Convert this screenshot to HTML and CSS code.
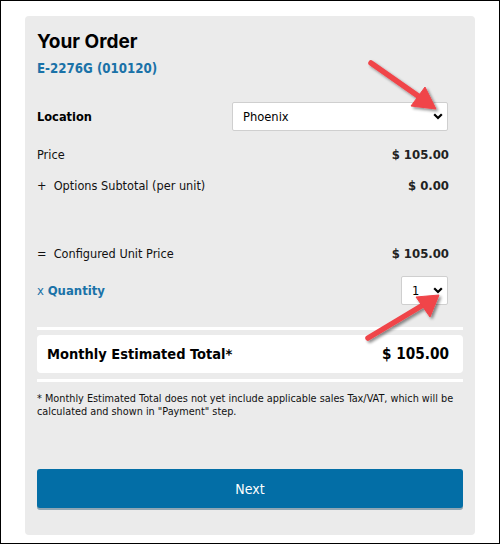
FILE: index.html
```html
<!DOCTYPE html>
<html lang="en">
<head>
<meta charset="utf-8">
<title>Your Order</title>
<link rel="stylesheet" href="styles.css">
</head>
<body>
<div class="frame">
  <div class="panel">
    <h1 class="title">Your Order</h1>
    <div class="sku">E-2276G (010120)</div>

    <div class="row row-location">
      <span class="label-strong">Location</span>
      <div class="select select-location">
        <span>Phoenix</span>
        <svg class="chev" width="10" height="7" viewBox="0 0 10 7"><path d="M1.2 1.2 L5 5 L8.8 1.2" fill="none" stroke="#000" stroke-width="2.2"/></svg>
      </div>
    </div>

    <div class="row row-price">
      <span>Price</span>
      <span class="value">$ 105.00</span>
    </div>

    <div class="row row-options">
      <span>+&nbsp; Options Subtotal (per unit)</span>
      <span class="value">$ 0.00</span>
    </div>

    <div class="row row-config">
      <span>=&nbsp; Configured Unit Price</span>
      <span class="value">$ 105.00</span>
    </div>

    <div class="row row-qty">
      <span class="qty-label">x <b>Quantity</b></span>
      <div class="select select-qty">
        <span>1</span>
        <svg class="chev" width="10" height="7" viewBox="0 0 10 7"><path d="M1.2 1.2 L5 5 L8.8 1.2" fill="none" stroke="#000" stroke-width="2.2"/></svg>
      </div>
    </div>

    <div class="rule rule-top"></div>
    <div class="total">
      <span>Monthly Estimated Total*</span>
      <span>$ 105.00</span>
    </div>
    <div class="rule rule-bottom"></div>

    <p class="note">* Monthly Estimated Total does not yet include applicable sales Tax/VAT, which will be calculated and shown in "Payment" step.</p>

    <button class="next" type="button">Next</button>
  </div>

  <svg class="arrow" width="500" height="545" viewBox="0 0 500 545">
    <defs>
      <filter id="sh" x="-20%" y="-20%" width="140%" height="140%">
        <feGaussianBlur in="SourceAlpha" stdDeviation="1.6"/>
        <feOffset dx="1.5" dy="2" result="b"/>
        <feComponentTransfer><feFuncA type="linear" slope="0.45"/></feComponentTransfer>
        <feMerge><feMergeNode/><feMergeNode in="SourceGraphic"/></feMerge>
      </filter>
    </defs>
    <g filter="url(#sh)" fill="#f0444a" stroke="#f0444a">
      <line x1="371" y1="63" x2="421" y2="98" stroke-width="5.5" stroke-linecap="round"/>
      <polygon points="436,109 411,106 425,87" stroke-width="1" stroke-linejoin="round"/>
      <line x1="368" y1="338" x2="423" y2="305" stroke-width="5.5" stroke-linecap="round"/>
      <polygon points="439,295 430,317 416,297" stroke-width="1" stroke-linejoin="round"/>
    </g>
  </svg>
</div>
</body>
</html>
```

FILE: styles.css
```css
* { box-sizing: border-box; }
html, body { margin: 0; padding: 0; background: #fff; }
body {
  font-family: "DejaVu Sans", Verdana, sans-serif;
  font-stretch: condensed;
  font-size: 12.6px;
  color: #111;
}
.frame {
  position: relative;
  width: 500px;
  height: 544px;
  border: 1px solid #000;
  padding: 15px 0 0 24px;
}
.panel {
  width: 450px;
  height: 519px;
  background: #ebebeb;
  border-radius: 4px;
  padding: 0 12px;
  display: flex;
  flex-direction: column;
}
.title {
  margin: 14px 0 0;
  height: 24px;
  line-height: 24px;
  font-family: "Inter", "Noto Sans", sans-serif;
  font-stretch: normal;
  font-weight: 700;
  font-size: 19px;
  color: #000;
}
.sku {
  margin-top: 6px;
  height: 18px;
  line-height: 18px;
  font-weight: 700;
  font-size: 13.2px;
  color: #1a72a8;
}
.row {
  display: flex;
  justify-content: space-between;
  align-items: center;
  padding-right: 14px;
  height: 20px;
}
.row-location { margin-top: 22px; height: 32px; padding-right: 15px; }
.row-price { margin-top: 12px; }
.row-options { margin-top: 11px; }
.row-config { margin-top: 48px; }
.row-qty { margin-top: 13px; height: 29px; padding-right: 15px; }
.label-strong { font-weight: 700; font-size: 12.7px; color: #000; }
.value {
  font-weight: 700;
  font-size: 13px;
  color: #222;
}
.qty-label { color: #1a72a8; font-size: 13px; }
.qty-label b { font-weight: 700; }
.select {
  background: #fff;
  border: 1px solid #cfcfcf;
  border-radius: 2px;
  display: flex;
  align-items: center;
  justify-content: space-between;
  font-size: 12.8px;
  color: #000;
}
.select-location { width: 216px; height: 29px; padding: 0 4px 0 10px; }
.select-qty { width: 47px; height: 29px; padding: 0 4px 0 10px; }
.chev { display: block; }
.rule { height: 3px; background: #fff; }
.rule-top { margin-top: 22px; }
.rule-bottom { margin-top: 6px; }
.total {
  margin-top: 5px;
  height: 38px;
  background: #fff;
  border-radius: 4px;
  display: flex;
  justify-content: space-between;
  align-items: center;
  padding: 0 14px 0 10px;
  font-weight: 700;
  font-size: 14.5px;
  color: #000;
}
.total span:last-child { font-size: 15.2px; }
.note {
  margin: 10px 0 0;
  font-size: 10.8px;
  line-height: 13px;
  color: #111;
}
.next {
  margin-top: 51px;
  height: 39px;
  width: 100%;
  border: 0;
  border-radius: 3px;
  background: #036ea6;
  color: #fff;
  font-family: "DejaVu Sans", Verdana, sans-serif;
  font-stretch: condensed;
  font-size: 14px;
  box-shadow: 0 2px 0 #8fa6b4;
}
.arrow { position: absolute; left: -1px; top: -1px; pointer-events: none; }
```
